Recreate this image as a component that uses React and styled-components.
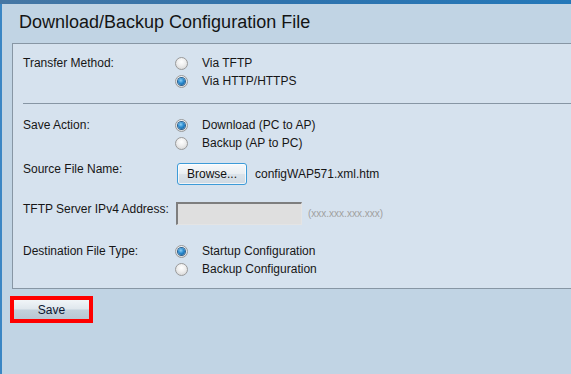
import React from "react";
import styled, { createGlobalStyle } from "styled-components";

const Global = createGlobalStyle`
  html, body { margin: 0; padding: 0; height: 100%; background: #c1d4e4; }
  #root { min-height: 100%; }
  * { box-sizing: border-box; }
`;

const Page = styled.div`
  min-height: 100vh;
  display: flex;
  flex-direction: column;
  font-family: "Liberation Sans", Arial, sans-serif;
  color: #161616;
  background: #c1d4e4;
`;

const TopBar = styled.div`
  height: 4px;
  background: linear-gradient(to right, #4677a4, #2f73ad 50%, #2478b9);
`;

const Body = styled.div`
  flex: 1;
  display: flex;
  flex-direction: column;
  border-left: 2px solid #3a86c4;
`;

const Title = styled.h1`
  margin: 0;
  padding: 8px 0 0 17px;
  font-size: 18px;
  line-height: 21px;
  font-weight: normal;
  color: #141414;
`;

const Panel = styled.div`
  margin: 10px 0 0 10px;
  padding: 10px 0 10px 10px;
  background: #d6e2ee;
  border: 1px solid #8796a4;
  border-right: none;
`;

const Row = styled.div`
  display: grid;
  grid-template-columns: 152px 1fr;
  align-items: start;
  margin-top: ${(p) => p.$top || 0}px;
  font-size: 12px;
  line-height: 18px;
`;

const Label = styled.div`
  white-space: nowrap;
`;

const Options = styled.div`
  display: flex;
  flex-direction: column;
`;

const Option = styled.label`
  display: flex;
  align-items: center;
  height: 18px;
  white-space: nowrap;
`;

const Radio = styled.span`
  width: 13px;
  height: 13px;
  margin: 1px 14px 0 0;
  border-radius: 50%;
  border: 1px solid #9a9a9a;
  background: radial-gradient(circle at 50% 35%, #ffffff 0%, #eeeeee 45%, #cfcfcf 100%);
  display: flex;
  align-items: center;
  justify-content: center;
  flex: none;
  &::after {
    content: "";
    width: 7px;
    height: 7px;
    border-radius: 50%;
    display: ${(p) => (p.$checked ? "block" : "none")};
    background: radial-gradient(circle at 40% 35%, #8fd0f5 0%, #2a8bd0 45%, #0b4f8a 100%);
    box-shadow: 0 0 0 1px #2a5f8e;
  }
`;

const Divider = styled.div`
  height: 1px;
  background: #8796a4;
  margin-top: 13px;
`;

const Control = styled.div`
  display: flex;
  align-items: center;
  padding-top: ${(p) => p.$pad || 0}px;
`;

const BrowseButton = styled.button`
  width: 70px;
  height: 22px;
  margin-left: 2px;
  padding: 0;
  font-family: inherit;
  font-size: 12px;
  color: #111;
  border: 1px solid #3d9bd8;
  border-radius: 3px;
  background: linear-gradient(#f7f9fb 0%, #e9eef2 48%, #dbe3ea 52%, #cfd9e2 100%);
  box-shadow: inset 0 0 0 1px rgba(255, 255, 255, 0.7);
`;

const FileName = styled.span`
  margin-left: 8px;
`;

const AddressInput = styled.input`
  width: 126px;
  height: 23px;
  margin-left: 1px;
  background: #dfdfdf;
  border-top: 2px solid #7e7e7e;
  border-left: 2px solid #7e7e7e;
  border-right: 1px solid #e4e4e4;
  border-bottom: 1px solid #e4e4e4;
  padding: 0 3px;
`;

const Hint = styled.span`
  margin-left: 6px;
  font-size: 10px;
  color: #a0a0a0;
`;

const SaveFrame = styled.div`
  margin: 7px 0 0 8px;
  width: 83px;
  height: 27px;
  border: 4px solid #ff0000;
  display: flex;
`;

const SaveButton = styled.button`
  flex: 1;
  padding: 0;
  border: none;
  font-family: inherit;
  font-size: 12px;
  color: #0c1630;
  background: linear-gradient(#f1f5f8 0%, #dfe7ed 48%, #c3d1dc 52%, #b7c7d3 100%);
`;

const RadioGroup = ({ items }) => (
  <Options>
    {items.map((it) => (
      <Option key={it.label}>
        <Radio $checked={it.checked} />
        {it.label}
      </Option>
    ))}
  </Options>
);

export default function App() {
  return (
    <>
      <Global />
      <Page>
        <TopBar />
        <Body>
          <Title>Download/Backup Configuration File</Title>
          <Panel>
            <Row>
              <Label>Transfer Method:</Label>
              <RadioGroup
                items={[
                  { label: "Via TFTP" },
                  { label: "Via HTTP/HTTPS", checked: true },
                ]}
              />
            </Row>
            <Divider />
            <Row $top={12}>
              <Label>Save Action:</Label>
              <RadioGroup
                items={[
                  { label: "Download (PC to AP)", checked: true },
                  { label: "Backup (AP to PC)" },
                ]}
              />
            </Row>
            <Row $top={8}>
              <Label>Source File Name:</Label>
              <Control $pad={3}>
                <BrowseButton>Browse...</BrowseButton>
                <FileName>configWAP571.xml.htm</FileName>
              </Control>
            </Row>
            <Row $top={15}>
              <Label>TFTP Server IPv4 Address:</Label>
              <Control $pad={2}>
                <AddressInput disabled />
                <Hint>(xxx.xxx.xxx.xxx)</Hint>
              </Control>
            </Row>
            <Row $top={17}>
              <Label>Destination File Type:</Label>
              <RadioGroup
                items={[
                  { label: "Startup Configuration", checked: true },
                  { label: "Backup Configuration" },
                ]}
              />
            </Row>
          </Panel>
          <SaveFrame>
            <SaveButton>Save</SaveButton>
          </SaveFrame>
        </Body>
      </Page>
    </>
  );
}
